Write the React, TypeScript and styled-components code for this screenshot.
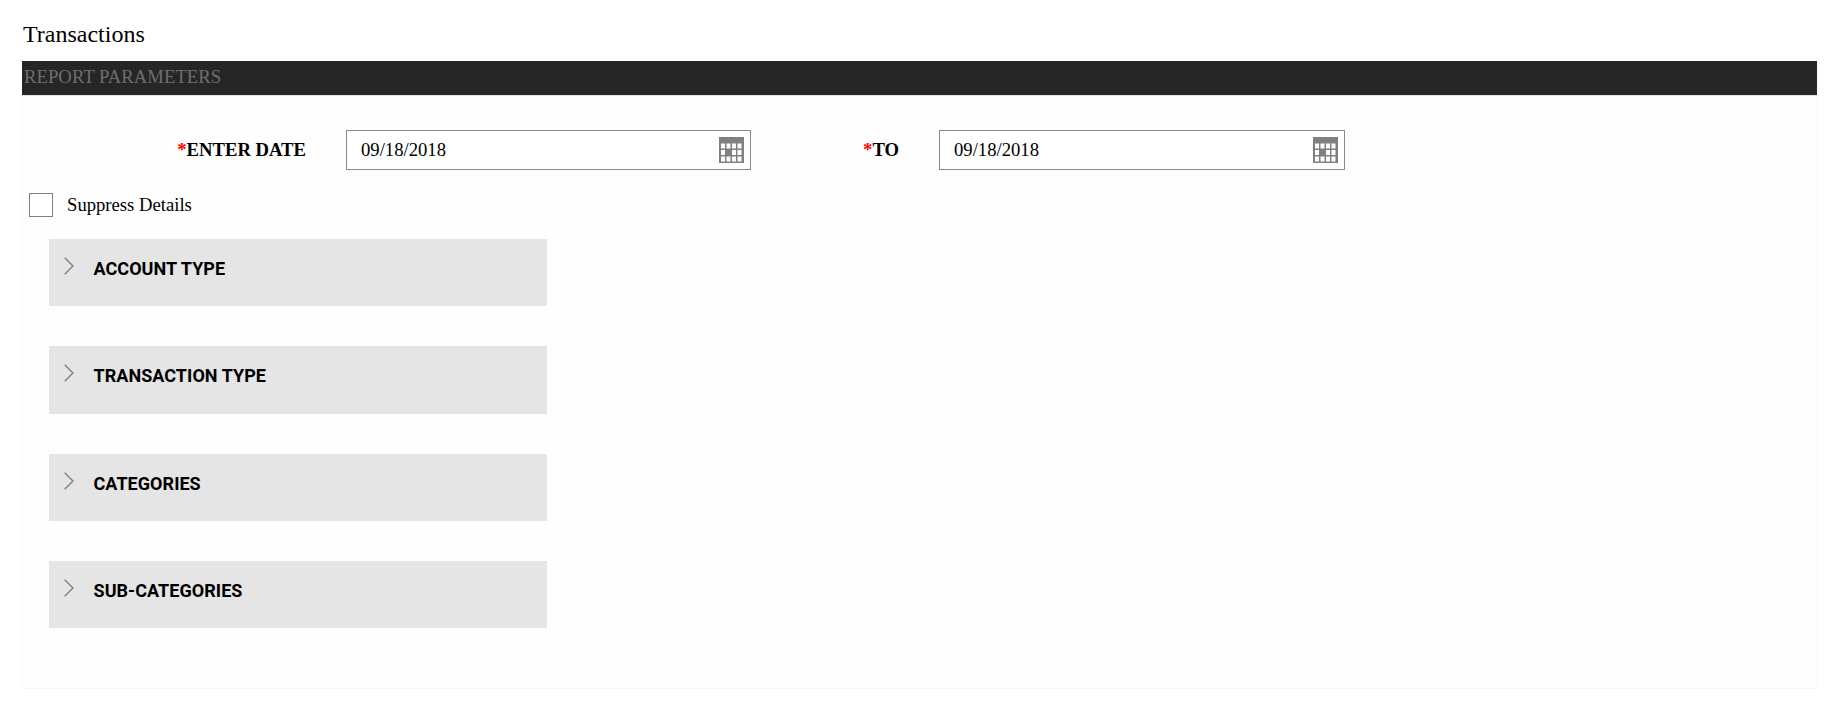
import * as React from "react";
import styled, { createGlobalStyle } from "styled-components";

const GlobalStyle = createGlobalStyle`
  html, body {
    margin: 0;
    padding: 0;
    background: #fff;
  }
  body {
    font-family: "Liberation Serif", "Times New Roman", serif;
    color: #000;
  }
`;

const Page = styled.div`
  padding: 0 22px 23px;
`;

const Title = styled.div`
  height: 61px;
  padding: 20px 0 0 1px;
  box-sizing: border-box;
  font-size: 24px;
  line-height: 28px;
`;

const SectionBar = styled.div`
  height: 34px;
  line-height: 32px;
  padding-left: 2px;
  background: #262626;
  border-bottom: 1px solid #e4e4e4;
  color: #6e6e6e;
  font-size: 18.67px;
  letter-spacing: 0.05px;
`;

const Panel = styled.div`
  border: 1px solid #fbfbfb;
  border-top: 0;
  border-bottom-color: #f6f6f6;
  background: #fefefe;
  padding: 34px 0 60px;
`;

const FormRow = styled.div`
  display: flex;
  align-items: center;
`;

const Label = styled.label<{ $width: number }>`
  width: ${({ $width }) => $width}px;
  margin-right: 40px;
  text-align: right;
  font-size: 18.67px;
  font-weight: bold;
`;

const Required = styled.span`
  color: #f00;
`;

const DateField = styled.div<{ $width: number }>`
  display: flex;
  align-items: center;
  justify-content: space-between;
  box-sizing: border-box;
  width: ${({ $width }) => $width}px;
  height: 40px;
  padding: 0 6px 0 14px;
  border: 1px solid #888;
  background: #fff;
`;

const DateInput = styled.input`
  flex: 1;
  min-width: 0;
  border: 0;
  outline: none;
  padding: 0;
  background: transparent;
  font-family: "Liberation Serif", "Times New Roman", serif;
  font-size: 18.67px;
  color: #000;
`;

const CheckRow = styled.div`
  display: flex;
  align-items: center;
  gap: 14px;
  margin-top: 23px;
  padding-left: 6px;
  font-size: 18.67px;
  line-height: 24px;
`;

const CheckBox = styled.input.attrs({ type: "checkbox" })`
  appearance: none;
  box-sizing: border-box;
  width: 24px;
  height: 24px;
  margin: 0;
  border: 1px solid #808080;
  background: #fff;
`;

const AccordionList = styled.div`
  display: flex;
  flex-direction: column;
  gap: 40px;
  width: 498px;
  margin: 22px 0 0 26px;
`;

const AccordionHeader = styled.div`
  display: flex;
  align-items: flex-start;
  height: 67.33px;
  padding: 18px 0 0 15px;
  box-sizing: border-box;
  background: #e5e5e5;
`;

const AccordionTitle = styled.span`
  margin: 1px 0 0 19.5px;
  font-family: Roboto, "Liberation Sans", sans-serif;
  font-size: 18px;
  font-weight: 700;
  letter-spacing: 0.05px;
  line-height: 22px;
  color: #000;
`;

const CalendarIcon = () => (
  <svg width="25" height="26" viewBox="0 0 25 26">
    <rect width="25" height="26" fill="#808080" />
    {[0, 1, 2].map((row) =>
      [0, 1, 2, 3].map((col) =>
        row === 1 && col === 1 ? null : (
          <rect
            key={`${row}-${col}`}
            x={2 + col * 5.5}
            y={6.5 + row * 6.5}
            width="4"
            height="5"
            fill="#fff"
          />
        )
      )
    )}
  </svg>
);

const Chevron = () => (
  <svg width="10" height="18" viewBox="0 0 10 18" fill="none">
    <path d="M0.7 0.7 L9 9 L0.7 17.3" stroke="#808080" strokeWidth="1.4" />
  </svg>
);

const sections = ["ACCOUNT TYPE", "TRANSACTION TYPE", "CATEGORIES", "SUB-CATEGORIES"];

const App = () => {
  return (
    <Page>
      <GlobalStyle />
      <Title>Transactions</Title>
      <SectionBar>REPORT PARAMETERS</SectionBar>
      <Panel>
        <FormRow>
          <Label $width={283}>
            <Required>*</Required>ENTER DATE
          </Label>
          <DateField $width={405}>
            <DateInput defaultValue="09/18/2018" />
            <CalendarIcon />
          </DateField>
          <Label $width={148}>
            <Required>*</Required>TO
          </Label>
          <DateField $width={406}>
            <DateInput defaultValue="09/18/2018" />
            <CalendarIcon />
          </DateField>
        </FormRow>
        <CheckRow>
          <CheckBox />
          <span>Suppress Details</span>
        </CheckRow>
        <AccordionList>
          {sections.map((name) => (
            <AccordionHeader key={name}>
              <Chevron />
              <AccordionTitle>{name}</AccordionTitle>
            </AccordionHeader>
          ))}
        </AccordionList>
      </Panel>
    </Page>
  );
};

export default App;
